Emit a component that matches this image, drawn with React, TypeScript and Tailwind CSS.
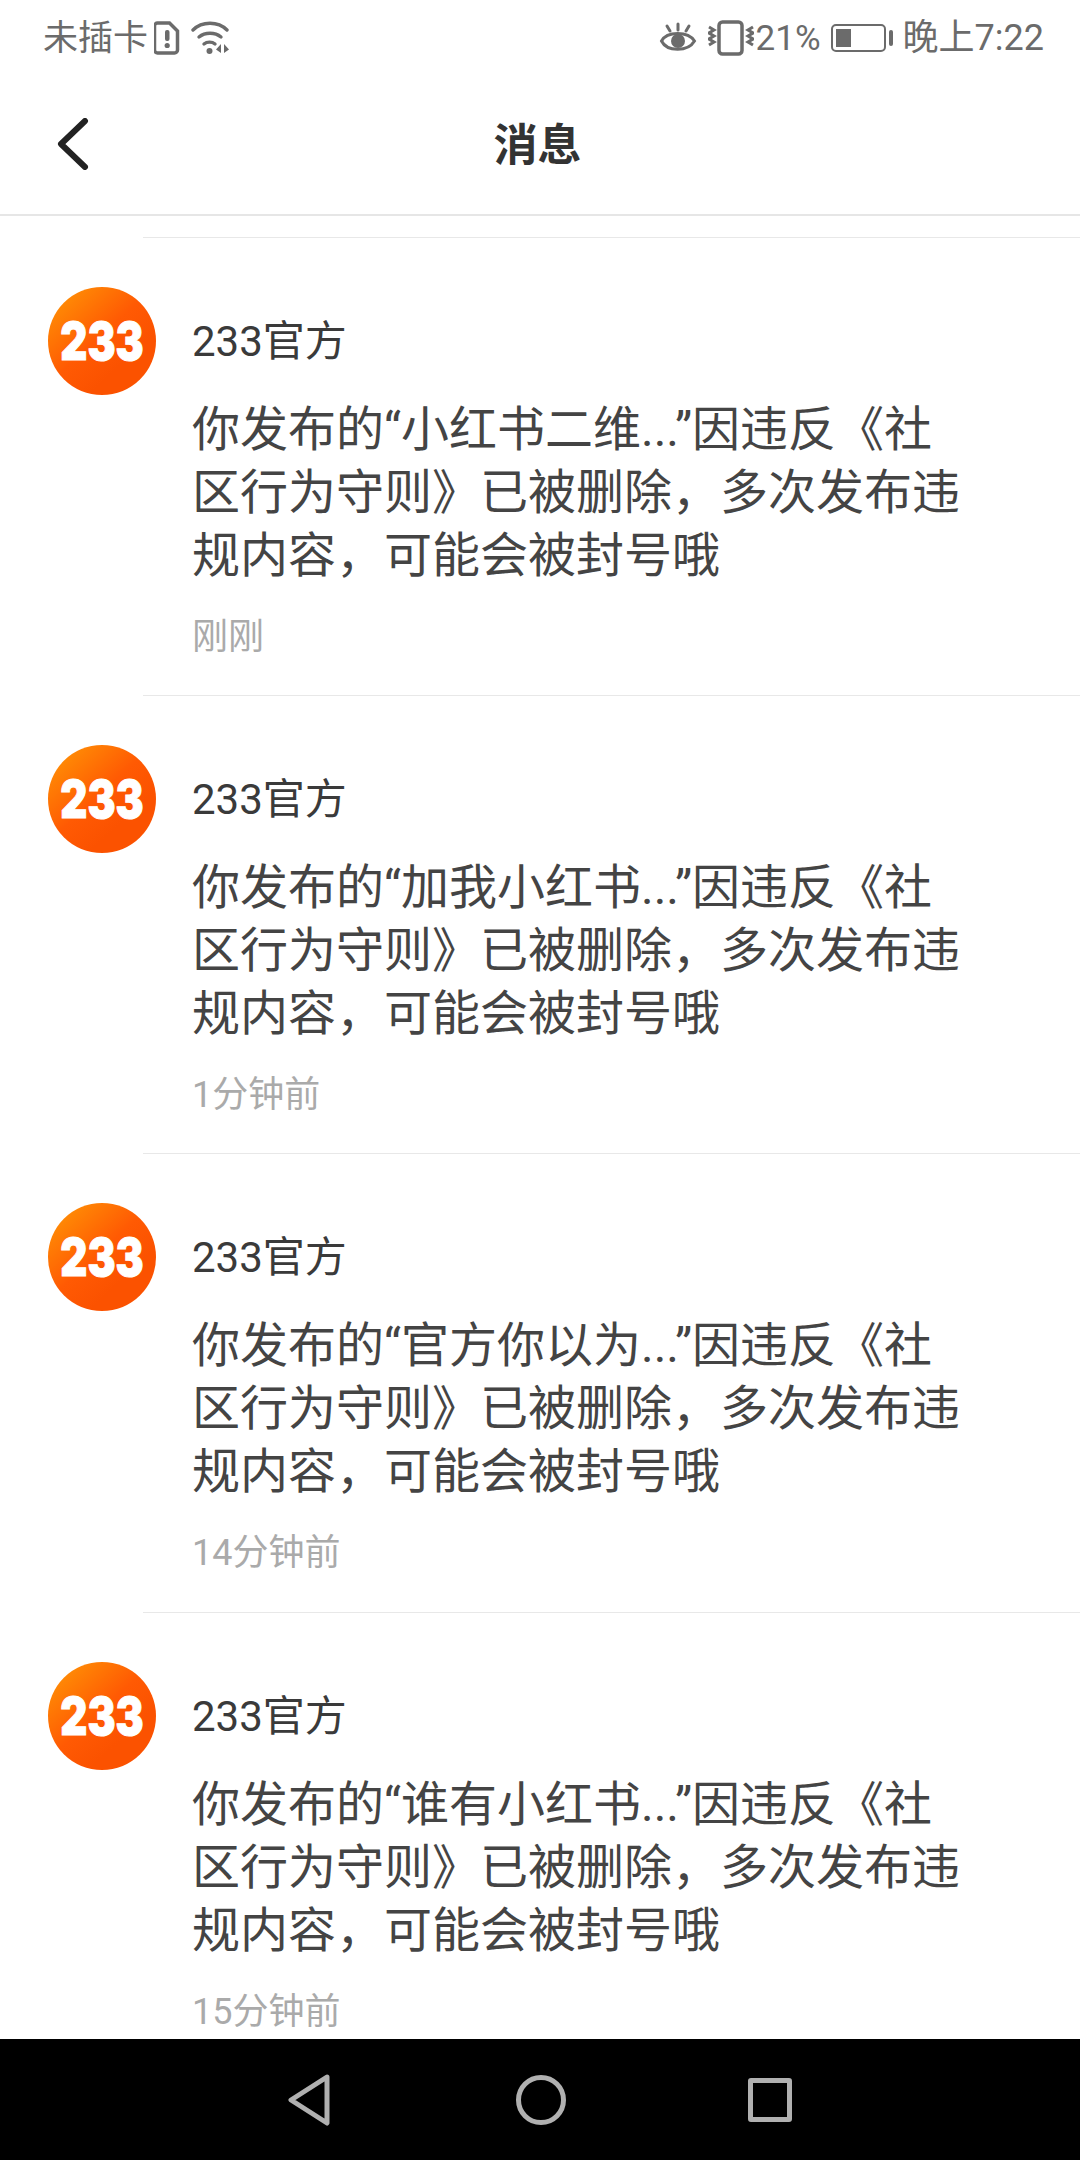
const messages = [
  { id: 1, title: "小红书二维", time: "刚刚" },
  { id: 2, title: "加我小红书", time: "1分钟前" },
  { id: 3, title: "官方你以为", time: "14分钟前" },
  { id: 4, title: "谁有小红书", time: "15分钟前" },
];

const Logo = () => (
  <svg width="108" height="108" viewBox="0 0 108 108" className="shrink-0">
    <defs>
      <linearGradient id="logoBg" x1="0.15" y1="0.1" x2="0.7" y2="0.7">
        <stop offset="0" stopColor="#ff8a05" />
        <stop offset="0.6" stopColor="#ff5a03" />
        <stop offset="1" stopColor="#fb5200" />
      </linearGradient>
    </defs>
    <circle cx="54" cy="54" r="54" fill="url(#logoBg)" />
    <text
      transform="translate(54 73) scale(1 1.25)"
      textAnchor="middle"
      fontFamily="Inter, sans-serif"
      fontWeight="900"
      fontSize="42"
      fill="#fff"
      stroke="#fff"
      strokeWidth="0.8"
    >
      233
    </text>
  </svg>
);

const StatusLeft = () => (
  <div className="flex items-center">
    <span className="text-[35px] leading-none text-[#6b6b6b]">未插卡</span>
    <svg width="26" height="34" viewBox="0 0 26 34" className="ml-[6px]">
      <path d="M3.500 2h12l8 8v19a3 3 0 0 1-3 3h-17a3 3 0 0 1-3-3V5a3 3 0 0 1 3-3z" fill="none" stroke="#6b6b6b" strokeWidth="3.500" />
      <rect x="11" y="9" width="4.500" height="11" rx="2" fill="#6b6b6b" />
      <circle cx="13.200" cy="24.500" r="2.600" fill="#6b6b6b" />
    </svg>
    <svg width="40" height="34" viewBox="0 0 40 34" className="ml-[11px]">
      <g fill="none" stroke="#6b6b6b" strokeWidth="3.400" strokeLinecap="round">
        <path d="M2 9C11 0 27 0 36 9" />
        <path d="M8 16c6-5 16-5 22 0" />
        <path d="M13 23c3-2.500 8-2.500 11 0" />
      </g>
      <circle cx="18.500" cy="30" r="3" fill="#6b6b6b" />
      <path d="M30 23v9l-5-3.500zM33 23v9l5-3.500z" fill="#6b6b6b" />
    </svg>
  </div>
);

const StatusRight = () => (
  <div className="flex items-center">
    <svg width="38" height="34" viewBox="0 0 38 34">
      <g fill="none" stroke="#6b6b6b" strokeWidth="3" strokeLinecap="round">
        <path d="M2.500 20C8 10 29 10 35.500 20 29 31 8 31 2.500 20z" />
        <path d="M19 3v6M8 5l3 5M30 5l-3 5" />
      </g>
      <circle cx="19" cy="20" r="7" fill="#6b6b6b" />
    </svg>
    <svg width="46" height="36" viewBox="2 0 46 36" className="ml-[11px]">
      <rect x="13" y="2" width="23" height="32" rx="3.500" fill="none" stroke="#6b6b6b" strokeWidth="3.500" />
      <g fill="none" stroke="#6b6b6b" strokeWidth="3">
        <path d="M3 7l5 3-5 3 5 3-5 3 5 3-5 3" />
        <path d="M47 7l-5 3 5 3-5 3 5 3-5 3 5 3" />
      </g>
    </svg>
    <span className="ml-[2px] text-[35px] leading-none text-[#6b6b6b]">21%</span>
    <div className="ml-[10px] flex items-center">
      <div className="flex h-[28px] w-[55px] items-center rounded-[5px] border-2 border-[#6b6b6b] p-[3px]">
        <div className="h-full w-[15px] bg-[#6b6b6b]" />
      </div>
      <div className="ml-[3px] h-[16px] w-[4px] rounded-sm bg-[#6b6b6b]" />
    </div>
    <span className="ml-[10px] text-[36px] leading-none text-[#6b6b6b]">晚上7:22</span>
  </div>
);

const App = () => {
  return (
    <div lang="zh-Hans" className="flex h-[2160px] w-[1080px] flex-col overflow-hidden bg-white font-['Roboto','Noto_Sans_CJK_SC',sans-serif]">
      <div className="flex h-[76px] shrink-0 items-center justify-between pl-[43px] pr-[36px]">
        <StatusLeft />
        <StatusRight />
      </div>
      <div className="relative flex h-[140px] shrink-0 items-center justify-center border-b-2 border-[#e6e6e6] pr-[5px] pt-[2px]">
        <svg width="34" height="52" viewBox="0 0 34 52" className="absolute left-[56px] top-[42px]">
          <path d="M29 3 5 26l24 23" fill="none" stroke="#222" strokeWidth="6" strokeLinecap="round" strokeLinejoin="round" />
        </svg>
        <h1 className="text-[44px] font-bold text-[#333]">消息</h1>
      </div>
      <div className="flex-1 overflow-hidden pt-[21px]">
        {messages.map((msg) => (
          <div key={msg.id} className="h-[458.200px]">
            <div className="ml-[143px] h-px bg-[#e8e8e8]" />
            <div className="flex pl-[48px] pt-[49px]">
              <Logo />
              <div className="ml-[36px] w-[840px]">
                <div className="mt-[32px] text-[42px] leading-[46px] text-[#3a3a3a]">233官方</div>
                <p className="mt-[33px] w-[775px] text-[48px] leading-[63px] text-[#444]">
                  {`你发布的“${msg.title}...”因违反《社区行为守则》已被删除，多次发布违规内容，可能会被封号哦`}
                </p>
                <div className="mt-[29px] text-[36px] leading-[42px] text-[#aaa]">{msg.time}</div>
              </div>
            </div>
          </div>
        ))}
      </div>
      <div className="flex h-[121px] shrink-0 items-center bg-black pl-[287px]">
        <svg width="44" height="54" viewBox="0 0 44 54">
          <path d="M40 4 4 27l36 23z" fill="none" stroke="#b0b0b0" strokeWidth="5" strokeLinejoin="round" />
        </svg>
        <div className="ml-[185px] h-[50px] w-[50px] rounded-full border-[5px] border-[#b0b0b0]" />
        <div className="ml-[182px] h-[44px] w-[44px] rounded-[3px] border-[5px] border-[#b0b0b0]" />
      </div>
    </div>
  );
};

export default App;
